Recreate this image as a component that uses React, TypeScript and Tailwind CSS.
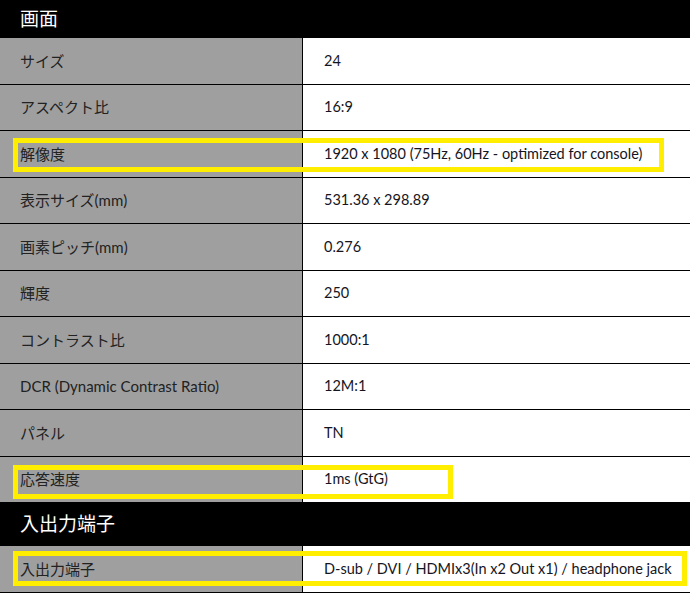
import React from "react";

const rows: [string, string][] = [
  ["サイズ", "24"],
  ["アスペクト比", "16:9"],
  ["解像度", "1920 x 1080 (75Hz, 60Hz - optimized for console)"],
  ["表示サイズ(mm)", "531.36 x 298.89"],
  ["画素ピッチ(mm)", "0.276"],
  ["輝度", "250"],
  ["コントラスト比", "1000:1"],
  ["DCR (Dynamic Contrast Ratio)", "12M:1"],
  ["パネル", "TN"],
  ["応答速度", "1ms (GtG)"],
];

const font = { fontFamily: '"Lato", "Noto Sans CJK JP", sans-serif' };

function Row({ label, value, h }: { label: string; value: string; h: string }) {
  return (
    <div className={`flex ${h} box-border border-b border-black`}>
      <div className="w-[303px] shrink-0 bg-[#9f9f9f] border-r border-black flex items-center pl-[20px] text-[15px] text-[#222]">
        {label}
      </div>
      <div className="flex-1 bg-white flex items-center pl-[21px] text-[14.5px] text-[#151522]">
        {value}
      </div>
    </div>
  );
}

export default function App() {
  return (
    <div className="relative w-[690px] h-[594px] overflow-hidden bg-white" style={font}>
      <div className="h-[38px] bg-black text-white flex items-center pl-[20px] text-[19px]">画面</div>
      {rows.map(([l, v]) => (
        <Row key={l} label={l} value={v} h="h-[46.5px]" />
      ))}
      <div className="h-[43px] bg-black text-white flex items-center pl-[20px] text-[19px]">入出力端子</div>
      <Row label="入出力端子" value="D-sub / DVI / HDMIx3(In x2 Out x1) / headphone jack" h="h-[47px]" />

      <div className="absolute left-[13px] top-[138px] w-[651px] h-[34px] border-[5px] border-[#ffee00]" />
      <div className="absolute left-[13px] top-[465px] w-[440px] h-[34px] border-[5px] border-[#ffee00]" />
      <div className="absolute left-[13px] top-[551px] w-[674px] h-[35px] border-[5px] border-[#ffee00]" />
    </div>
  );
}
